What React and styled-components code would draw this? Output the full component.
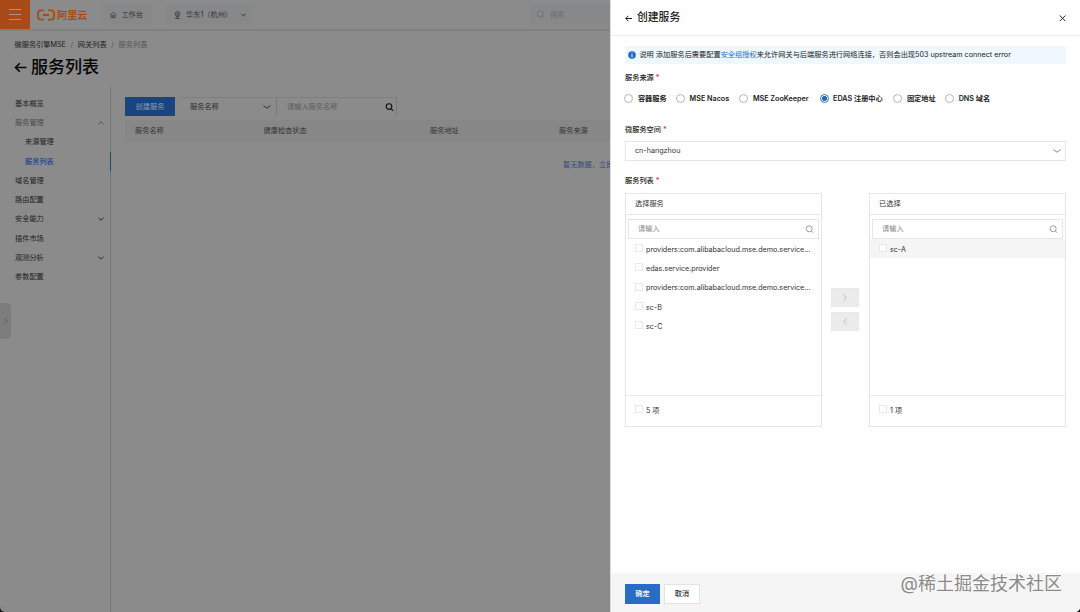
import React, { useState } from "react";
import styled, { createGlobalStyle } from "styled-components";

const GlobalStyle = createGlobalStyle`
    * {
        box-sizing: border-box;
    }

    body {
        margin: 0;
        background: #111;
        font-family: Inter, "Noto Sans CJK SC", sans-serif;
        font-size: 7.2px;
        line-height: 12px;
        color: #222;
    }

    button, input {
        font: inherit;
    }
`;

const Page = styled.div`
    display: grid;
    grid-template-columns: 610px 470px;
    width: 1080px;
    height: 612px;
    overflow: hidden;
    border-radius: 0 0 5px 5px;
    background: #8b8b8b;
    white-space: nowrap;
`;

const Console = styled.div`
    display: flex;
    flex-direction: column;
    min-width: 0;
    height: 612px;
    overflow: hidden;
    color: #1d1d1d;
`;

const TopBar = styled.header`
    display: flex;
    align-items: center;
    flex: none;
    height: 31px;
    border-bottom: 2px solid #808080;

    > * {
        flex: none;
    }
`;

const MenuButton = styled.div`
    display: flex;
    align-items: center;
    justify-content: center;
    width: 30px;
    height: 29px;
    margin-right: 7px;
    background: #a84b19;
`;

const Logo = styled.div`
    display: flex;
    align-items: center;
    gap: 2px;
    width: 66px;
    color: #a84b1b;
    font-size: 10.2px;
    font-weight: 700;
`;

const TopItem = styled.div`
    display: flex;
    align-items: center;
    height: 20px;
    width: ${(props) => props.$width}px;
    margin-left: ${(props) => props.$gap || 0}px;
    padding-left: ${(props) => props.$pad}px;
    background: #878889;
    color: ${(props) => (props.$muted ? "#6c6e70" : "#333")};

    span {
        margin: 0 9px 0 5px;
    }
`;

const Breadcrumb = styled.div`
    display: flex;
    gap: 4.7px;
    height: 12px;
    margin: 7.5px 0 0 14.5px;

    span {
        color: #555;
    }
`;

const PageTitle = styled.h1`
    display: flex;
    align-items: center;
    gap: 4px;
    height: 24px;
    margin: 4.5px 0 8px 14px;
    font-size: 17px;
    font-weight: 500;
    line-height: 24px;
    color: #060606;
`;

const Body = styled.div`
    display: flex;
    flex: 1;
`;

const Sidebar = styled.nav`
    flex: none;
    width: 111px;
    padding-top: 7px;
    border-right: 1px solid #737373;
`;

const NavItem = styled.div`
    display: flex;
    align-items: center;
    justify-content: space-between;
    height: 19.3px;
    margin-right: -1px;
    padding: 0 6px 0 ${(props) => (props.$child ? 25 : 15)}px;
    border-right: 1px solid ${(props) => (props.$active ? "#1b4a86" : "transparent")};
    color: ${(props) => (props.$active ? "#1b4a86" : props.$open ? "#4a4a4a" : "#1d1d1d")};
    font-weight: ${(props) => (props.$active ? 500 : 400)};
`;

/* Small tab on the left edge that opens the collapsed product menu */
const EdgeHandle = styled.div`
    position: absolute;
    top: 303px;
    left: 0;
    display: flex;
    align-items: center;
    justify-content: center;
    width: 11px;
    height: 36px;
    border-radius: 0 5px 5px 0;
    background: #7d7d7d;
    color: #555;
`;

const Main = styled.main`
    flex: 1;
    min-width: 0;
    padding: 10px 0 0 14px;
`;

const Toolbar = styled.div`
    display: flex;
    height: 19px;
    margin-bottom: 4px;
`;

const CreateButton = styled.button`
    width: 50px;
    margin-right: 5px;
    padding: 0;
    border: 0;
    background: #18457f;
    color: #8f9eb2;
`;

const FilterBox = styled.div`
    display: flex;
    align-items: center;
    justify-content: space-between;
    width: ${(props) => props.$width}px;
    padding: 0 ${(props) => props.$end}px 0 10px;
    border-top: 1px solid #7f7f7f;
    border-right: 1px solid #7a7a7a;
    color: ${(props) => (props.$muted ? "#5c5c5c" : "#2b2b2b")};
`;

const TableHead = styled.div`
    display: grid;
    grid-template-columns: 128.5px 166.5px 129px 1fr;
    align-items: center;
    height: 22px;
    padding-left: 10px;
    background: #878787;
    color: #333;
`;

const EmptyText = styled.div`
    padding: 17px 0 0 438px;
    color: #2b4d80;
`;

const Drawer = styled.aside`
    display: flex;
    flex-direction: column;
    height: 612px;
    background: #fff;
    border-left: 1px solid #dcdcdc;
`;

const DrawerHeader = styled.div`
    display: flex;
    align-items: center;
    flex: none;
    height: 36px;
    padding: 1px 13px 0 14px;
    border-bottom: 1px solid #eee;

    h2 {
        flex: 1;
        margin: 0 0 0 5px;
        font-size: 10.8px;
        font-weight: 500;
    }
`;

const DrawerBody = styled.div`
    flex: 1;
    padding: 10px 14px 0;
`;

const Notice = styled.div`
    display: flex;
    align-items: center;
    gap: 4px;
    height: 18px;
    padding-left: 3px;
    background: #eff8ff;
    letter-spacing: 0.012px;

    span {
        margin-left: -0.6px;
    }

    a {
        color: #2b6fd6;
    }
`;

const Label = styled.div`
    height: 12px;
    margin-top: ${(props) => props.$top}px;
    font-weight: 500;

    &::after {
        content: "*";
        margin-left: 2px;
        color: #e0342c;
    }
`;

const RadioGroup = styled.div`
    display: grid;
    grid-template-columns: 51.7px 63.3px 80.2px 73.8px 51.8px 1fr;
    height: 12px;
    margin: 9px 0 0 -0.6px;
    font-weight: 600;
`;

const RadioItem = styled.label`
    display: flex;
    align-items: center;
    gap: 4.5px;
`;

const RadioDot = styled.i`
    width: 9px;
    height: 9px;
    border: 1px solid ${(props) => (props.$on ? "#2f72cc" : "#b5b5b5")};
    border-radius: 50%;
    background: ${(props) => (props.$on ? "radial-gradient(#2268c8 0 2.2px, #fff 2.8px)" : "#fff")};
`;

const SelectBox = styled.div`
    display: flex;
    align-items: center;
    justify-content: space-between;
    height: 20px;
    margin-top: 5.5px;
    padding: 0 4px 0 9px;
    border: 1px solid #e6e6e6;
    color: #333;

    svg {
        color: #777;
    }
`;

const Transfer = styled.div`
    display: flex;
    justify-content: space-between;
    align-items: center;
    margin-top: 6.5px;
`;

const Panel = styled.div`
    display: flex;
    flex-direction: column;
    width: 197px;
    height: 234px;
    border: 1px solid #e6e6e6;
    color: #333;
`;

const PanelTitle = styled.div`
    height: 21px;
    padding: 4px 9px;
    border-bottom: 1px solid #e6e6e6;
`;

const SearchBox = styled.div`
    display: flex;
    align-items: center;
    justify-content: space-between;
    height: 20px;
    margin: 4px 2px 0;
    padding: 0 4px 0 9px;
    border: 1px solid #e6e6e6;
    color: #888;
`;

const Options = styled.div`
    flex: 1;
`;

const Option = styled.label`
    display: flex;
    align-items: center;
    gap: 3px;
    height: 19.3px;
    padding-left: 9px;
    background: ${(props) => (props.$hover ? "#f5f5f5" : "none")};

    span {
        padding-top: 2px;
        letter-spacing: -0.015px;
    }
`;

const Check = styled.i`
    width: 8px;
    height: 8px;
    margin-bottom: 1px;
    border: 1px solid #e8e8e8;
    background: #fff;
`;

const PanelFooter = styled.div`
    height: 31px;
    padding-top: 4px;
    border-top: 1px solid #e8e8e8;
`;

const MoveButtons = styled.div`
    display: flex;
    flex-direction: column;
    gap: 5px;
    margin: 0 1px 2px 0;
`;

const MoveButton = styled.button`
    display: flex;
    align-items: center;
    justify-content: center;
    width: 28px;
    height: 19px;
    padding: 0;
    border: 1px solid #e8e8e8;
    background: #ebebeb;
    color: #b4b4b4;
`;

const DrawerFooter = styled.div`
    display: flex;
    align-items: flex-start;
    gap: 4px;
    height: 39px;
    padding: 11px 18px 0 14px;
    background: #f5f5f5;
`;

const Button = styled.button`
    width: ${(props) => (props.$primary ? 35 : 36)}px;
    height: 20px;
    padding: 0;
    border: 1px solid ${(props) => (props.$primary ? "#286cc6" : "#e3e3e3")};
    background: ${(props) => (props.$primary ? "#286cc6" : "#fff")};
    color: ${(props) => (props.$primary ? "#fff" : "#333")};
    font-weight: 500;
`;

const Watermark = styled.div`
    margin: -12px 0 0 auto;
    font-size: 18px;
    line-height: 24px;
    font-weight: 400;
    color: #8a8a8a;
    text-shadow: -0.6px -0.6px 0 #fff;
`;

const Svg = ({ w, h, width = 1, children }) => (
    <svg width={w} height={h} viewBox={`0 0 ${w} ${h}`} fill="none" stroke="currentColor" strokeWidth={width}>
        {children}
    </svg>
);

const Chevron = ({ up, size = 6 }) => (
    <Svg w={size} h={4} width={0.9}>
        <path d={up ? `M0.4 3.4L${size / 2} 0.8L${size - 0.4} 3.4` : `M0.4 0.6L${size / 2} 3.2L${size - 0.4} 0.6`} />
    </Svg>
);

const SearchIcon = ({ width = 0.8 }) => (
    <Svg w={9} h={9} width={width}>
        <circle cx="4.2" cy="3.8" r="3" />
        <path d="M6.4 6L8.2 7.8" />
    </Svg>
);

const navItems = [
    { text: "基本概览" },
    { text: "服务管理", open: true, arrow: true },
    { text: "来源管理", child: true },
    { text: "服务列表", child: true, active: true },
    { text: "域名管理" },
    { text: "路由配置" },
    { text: "安全能力", arrow: true },
    { text: "插件市场" },
    { text: "观测分析", arrow: true },
    { text: "参数配置" },
];

const sources = ["容器服务", "MSE Nacos", "MSE ZooKeeper", "EDAS 注册中心", "固定地址", "DNS 域名"];

const services = [
    "providers:com.alibabacloud.mse.demo.service...",
    "edas.service.provider",
    "providers:com.alibabacloud.mse.demo.service...",
    "sc-B",
    "sc-C",
];

const TransferPanel = ({ title, items, highlight }) => (
    <Panel>
        <PanelTitle>{title}</PanelTitle>
        <SearchBox>请输入<SearchIcon /></SearchBox>
        <Options>
            {items.map((item, i) => (
                <Option key={i} $hover={highlight}>
                    <Check />
                    <span>{item}</span>
                </Option>
            ))}
        </Options>
        <PanelFooter>
            <Option>
                <Check />
                <span>{items.length} 项</span>
            </Option>
        </PanelFooter>
    </Panel>
);

const App = () => {
    const [source, setSource] = useState("EDAS 注册中心");

    return (
        <>
            <GlobalStyle />
            <Page>
                <Console>
                    <TopBar>
                        <MenuButton>
                            <svg width="12" height="11" stroke="#a99183" strokeWidth="1">
                                <path d="M0 0.5H12M0 5.5H12M0 10.5H12" />
                            </svg>
                        </MenuButton>
                        <Logo>
                            <Svg w={18} h={12} width={1.8}>
                                <path d="M7 1.3H4Q1 1.3 1 4V8Q1 10.7 4 10.7H7M11 1.3H14Q17 1.3 17 4V8Q17 10.7 14 10.7H11M6 6H12" />
                            </Svg>
                            阿里云
                        </Logo>
                        <TopItem $width={49} $pad={7}>
                            <Svg w={8} h={8} width={0.8}>
                                <path d="M0.5 3.5L4 0.8L7.5 3.5M1.5 3V7.2H6.5V3M3 7V4.7H5V7" />
                            </Svg>
                            <span>工作台</span>
                        </TopItem>
                        <TopItem $width={87} $gap={14} $pad={8}>
                            <Svg w={7} h={8} width={0.8}>
                                <circle cx="3.5" cy="2.8" r="2.3" />
                                <circle cx="3.5" cy="2.8" r="0.7" />
                                <path d="M2 5L3.5 6.5L5 5M1 7.4H6" />
                            </Svg>
                            <span>华东1（杭州）</span>
                            <Chevron size={5} />
                        </TopItem>
                        <TopItem $width={80} $gap={277} $pad={6} $muted>
                            <SearchIcon />
                            <span>搜索</span>
                        </TopItem>
                    </TopBar>
                    <Breadcrumb>
                        微服务引擎MSE <span>/</span> 网关列表 <span>/</span> <span>服务列表</span>
                    </Breadcrumb>
                    <PageTitle>
                        <Svg w={13} h={11} width={1.6}>
                            <path d="M12.5 5.5H1.5M5.8 1.2L1.5 5.5L5.8 9.8" />
                        </Svg>
                        服务列表
                    </PageTitle>
                    <Body>
                        <Sidebar>
                            {navItems.map((item) => (
                                <NavItem key={item.text + item.child} $child={item.child} $active={item.active} $open={item.open}>
                                    {item.text}
                                    {item.arrow && <Chevron up={item.open} size={6} />}
                                </NavItem>
                            ))}
                        </Sidebar>
                        <Main>
                            <Toolbar>
                                <CreateButton>创建服务</CreateButton>
                                <FilterBox $width={97} $end={5}>
                                    服务名称
                                    <Chevron size={8} />
                                </FilterBox>
                                <FilterBox $width={120} $end={2} $muted>
                                    请输入服务名称
                                    <Svg w={9} h={9} width={1.1}>
                                        <circle cx="4" cy="3.6" r="2.8" stroke="#111" />
                                        <path d="M6.1 5.7L8.2 7.8" stroke="#111" />
                                    </Svg>
                                </FilterBox>
                            </Toolbar>
                            <TableHead>
                                <span>服务名称</span>
                                <span>健康检查状态</span>
                                <span>服务地址</span>
                                <span>服务来源</span>
                            </TableHead>
                            <EmptyText>暂无数据，立即</EmptyText>
                        </Main>
                    </Body>
                    <EdgeHandle>
                        <Svg w={4} h={6} width={0.8}>
                            <path d="M0.6 0.5L3.2 3L0.6 5.5" />
                        </Svg>
                    </EdgeHandle>
                </Console>
                <Drawer>
                    <DrawerHeader>
                        <Svg w={7} h={7} width={1}>
                            <path d="M7 3.5H0.8M3.4 0.8L0.8 3.5L3.4 6.2" />
                        </Svg>
                        <h2>创建服务</h2>
                        <Svg w={8} h={8} width={1}>
                            <path d="M0.8 1.5L6.4 7.1M6.4 1.5L0.8 7.1" />
                        </Svg>
                    </DrawerHeader>
                    <DrawerBody>
                        <Notice>
                            <svg width="8" height="8" viewBox="0 0 8 8">
                                <circle cx="4" cy="4" r="3.8" fill="#2468c4" />
                                <path d="M4 1.6V2.5M4 3.4V6.2" stroke="#fff" />
                            </svg>
                            <span>
                                说明 添加服务后需要配置<a>安全组授权</a>来允许网关与后端服务进行网络连接，否则会出现503 upstream connect error
                            </span>
                        </Notice>
                        <Label $top={7.5}>服务来源</Label>
                        <RadioGroup>
                            {sources.map((name) => (
                                <RadioItem key={name} onClick={() => setSource(name)}>
                                    <RadioDot $on={name === source} />
                                    {name}
                                </RadioItem>
                            ))}
                        </RadioGroup>
                        <Label $top={19}>微服务空间</Label>
                        <SelectBox>
                            cn-hangzhou
                            <Chevron size={8} />
                        </SelectBox>
                        <Label $top={13.5}>服务列表</Label>
                        <Transfer>
                            <TransferPanel title="选择服务" items={services} />
                            <MoveButtons>
                                <MoveButton>
                                    <Svg w={4} h={7} width={0.8}>
                                        <path d="M0.6 0.5L3.2 3.5L0.6 6.5" />
                                    </Svg>
                                </MoveButton>
                                <MoveButton>
                                    <Svg w={4} h={7} width={0.8}>
                                        <path d="M3.4 0.5L0.8 3.5L3.4 6.5" />
                                    </Svg>
                                </MoveButton>
                            </MoveButtons>
                            <TransferPanel title="已选择" items={["sc-A"]} highlight />
                        </Transfer>
                    </DrawerBody>
                    <DrawerFooter>
                        <Button $primary>确定</Button>
                        <Button>取消</Button>
                        <Watermark>@稀土掘金技术社区</Watermark>
                    </DrawerFooter>
                </Drawer>
            </Page>
        </>
    );
};

export default App;
